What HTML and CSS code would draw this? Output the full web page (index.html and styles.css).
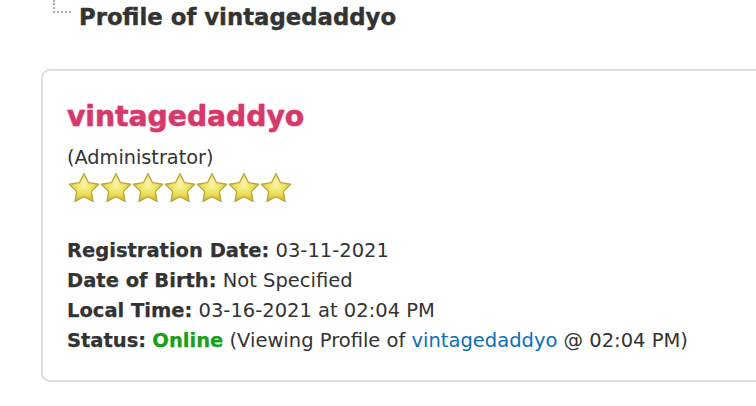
FILE: index.html
```html
<!DOCTYPE html>
<html lang="en">
<head>
<meta charset="utf-8">
<title>Profile of vintagedaddyo</title>
<link rel="stylesheet" href="styles.css">
</head>
<body>
<div class="page">
  <div class="header">
    <span class="tree"></span>
    <h1 class="title">Profile of vintagedaddyo</h1>
  </div>
  <div class="card">
    <div class="username">vintagedaddyo</div>
    <div class="usertitle">(Administrator)</div>
    <div class="stars">
      <svg width="0" height="0" class="defs" aria-hidden="true">
        <defs>
          <radialGradient id="sg" cx="50%" cy="45%" r="60%">
            <stop offset="0" stop-color="#fbf5a0"/>
            <stop offset="0.5" stop-color="#ece05a"/>
            <stop offset="1" stop-color="#c7b025"/>
          </radialGradient>
          <symbol id="star" viewBox="0 0 32 32">
            <path d="M16 1.5 L20.6 10.7 L30.7 12.2 L23.4 19.4 L25.1 29.5 L16 24.8 L6.9 29.5 L8.6 19.4 L1.3 12.2 L11.4 10.7 Z" fill="url(#sg)" stroke="#b8a53c" stroke-width="1.2" stroke-linejoin="round"/>
            <path d="M16 5 L19 12 L12.5 13.2 Z" fill="#fffbe0" opacity="0.45"/>
          </symbol>
        </defs>
      </svg>
      <svg class="star" viewBox="0 0 32 32"><use href="#star"/></svg>
      <svg class="star" viewBox="0 0 32 32"><use href="#star"/></svg>
      <svg class="star" viewBox="0 0 32 32"><use href="#star"/></svg>
      <svg class="star" viewBox="0 0 32 32"><use href="#star"/></svg>
      <svg class="star" viewBox="0 0 32 32"><use href="#star"/></svg>
      <svg class="star" viewBox="0 0 32 32"><use href="#star"/></svg>
      <svg class="star" viewBox="0 0 32 32"><use href="#star"/></svg>
    </div>
    <div class="info">
      <div class="row"><strong>Registration Date:</strong> 03-11-2021</div>
      <div class="row"><strong>Date of Birth:</strong> Not Specified</div>
      <div class="row"><strong>Local Time:</strong> 03-16-2021 at 02:04 PM</div>
      <div class="row"><strong>Status:</strong> <strong class="online">Online</strong> (Viewing Profile of <a class="link" href="#">vintagedaddyo</a> @ 02:04 PM)</div>
    </div>
  </div>
</div>
</body>
</html>
```
FILE: styles.css
```css
html, body {
  margin: 0;
  padding: 0;
  background: #ffffff;
  overflow: hidden;
}

.page {
  width: 756px;
  height: 406px;
  overflow: hidden;
  font-family: "DejaVu Sans", Verdana, sans-serif;
  color: #333333;
}

.header {
  display: flex;
  align-items: flex-start;
  padding-left: 53px;
  height: 32px;
}

.tree {
  display: block;
  width: 16px;
  height: 11px;
  border-left: 2px dotted #a8a8a8;
  border-bottom: 2px dotted #a8a8a8;
}

.title {
  margin: 2px 0 0 8px;
  font-size: 22.8px;
  line-height: 30px;
  font-weight: bold;
  color: #333333;
  -webkit-text-stroke: 0.4px #333333;
  white-space: nowrap;
}

.card {
  margin: 37px 0 0 41px;
  width: 780px;
  box-sizing: border-box;
  border: 2px solid #dedede;
  border-radius: 9px;
  padding: 26px 0 24px 24px;
}

.username {
  font-size: 28.2px;
  font-weight: bold;
  line-height: 40px;
  color: #d5386b;
  -webkit-text-stroke: 0.4px #d5386b;
  text-shadow: 0 0 2px rgba(213, 56, 107, 0.45);
  white-space: nowrap;
}

.usertitle {
  margin-top: 7px;
  font-size: 19.3px;
  line-height: 28px;
  white-space: nowrap;
}

.stars {
  display: flex;
  height: 32px;
  margin-left: 1px;
}

.defs {
  position: absolute;
  width: 0;
  height: 0;
}

.star {
  width: 32px;
  height: 32px;
  display: block;
  flex: none;
}

.info {
  margin-top: 32px;
  font-size: 19.5px;
  line-height: 30px;
}

.row {
  white-space: nowrap;
}

.row strong {
  font-weight: bold;
  -webkit-text-stroke: 0.25px #333333;
}

.row strong.online {
  color: #17a11a;
  -webkit-text-stroke: 0.25px #17a11a;
}

.link {
  color: #0a6fb9;
  text-decoration: none;
}
```
